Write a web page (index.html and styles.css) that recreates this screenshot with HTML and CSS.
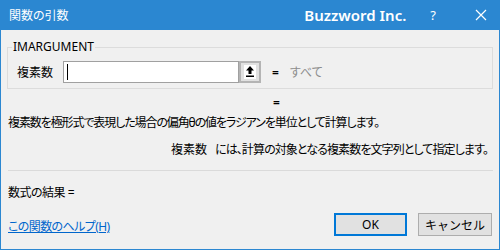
FILE: index.html
```html
<!DOCTYPE html>
<html lang="ja">
<head>
  <meta charset="UTF-8">
  <title>関数の引数</title>
  <link rel="stylesheet" href="styles.css">
</head>
<body>
  <div class="window">
    <header class="titlebar">
      <span class="title">関数の引数</span>
      <span class="brand">Buzzword Inc.</span>
      <span class="help">?</span>
      <svg class="close" width="12" height="12" viewBox="0 0 12 12">
        <path d="M1 1 L11 11 M11 1 L1 11" stroke="#fff" stroke-width="1.2" fill="none"/>
      </svg>
    </header>

    <main class="content">
      <fieldset class="group">
        <legend>IMARGUMENT</legend>
        <div class="arg-row">
          <span class="arg-name">複素数</span>
          <div class="arg-input"><span class="caret"></span></div>
          <div class="ref-btn">
            <svg width="18" height="18" viewBox="0 0 18 18">
              <rect x="3" y="2" width="12" height="14" fill="#fff"/>
              <path d="M9 3 L5 7.5 L7.5 7.5 L7.5 11 L10.5 11 L10.5 7.5 L13 7.5 Z" fill="#000"/>
              <rect x="5" y="12.5" width="8" height="1.5" fill="#000"/>
            </svg>
          </div>
          <span class="eq">=</span>
          <span class="arg-value">すべて</span>
        </div>
      </fieldset>

      <div class="result-eq">=</div>
      <p class="desc">複素数を極形式で表現した場合の偏角θの値をラジアンを単位として計算します。</p>
      <p class="arg-desc"><span class="arg-label">複素数</span>には、計算の対象となる複素数を文字列として指定します。</p>
      <hr class="sep">
      <p class="formula">数式の結果 =</p>

      <footer class="bottom">
        <a href="#" class="help-link">この関数のヘルプ(H)</a>
        <div class="buttons">
          <button class="btn btn-ok">OK</button>
          <button class="btn">キャンセル</button>
        </div>
      </footer>
    </main>
  </div>
</body>
</html>
```

FILE: styles.css
```css
body {
  margin: 0;
  font-family: "Noto Sans", "Noto Sans CJK JP", sans-serif;
  font-size: 12px;
  font-feature-settings: "palt";
  color: #000;
}
.window {
  width: 500px;
  height: 250px;
  box-sizing: border-box;
  background-color: #f0f0f0;
  border: 1px solid #2b87d1;
  border-top: none;
  overflow: hidden;
}
.titlebar {
  height: 30px;
  margin: 0 -1px;
  display: flex;
  align-items: center;
  background-color: #2b87d1;
  color: #fff;
}
.title {
  margin-left: 9px;
  font-size: 12px;
  flex: 1;
}
.brand {
  font-size: 15px;
  font-weight: 600;
  margin-right: 24px;
}
.help {
  font-size: 13px;
  margin-right: 39px;
}
.close {
  margin-right: 13px;
}
.content {
  padding: 9px 6px 0;
}
.group {
  margin: 0;
  padding: 6px 0 5px 4px;
  border: 1px solid #dcdcdc;
}
.group legend {
  padding: 0 1px;
  line-height: 16px;
}
.arg-row {
  display: flex;
  align-items: center;
  height: 22px;
  margin-left: 5px;
}
.arg-name {
  width: 46px;
}
.arg-input {
  width: 176px;
  height: 22px;
  box-sizing: border-box;
  background-color: #fff;
  border: 1px solid #a0a0a0;
  display: flex;
  align-items: center;
  padding-left: 3px;
}
.caret {
  width: 1px;
  height: 16px;
  background-color: #000;
}
.ref-btn {
  width: 22px;
  height: 22px;
  box-sizing: border-box;
  border: 2px solid #b4b4b4;
  background-color: #e1e1e1;
  display: flex;
  align-items: center;
  justify-content: center;
}
.eq {
  margin-left: 11px;
  font-weight: 600;
}
.arg-value {
  margin-left: 11px;
  color: #8c8c8c;
}
.result-eq {
  margin-top: 6px;
  height: 16px;
  line-height: 16px;
  padding-left: 266px;
  font-weight: 600;
}
.desc {
  margin: 4px 0 0 1px;
  line-height: 16px;
  letter-spacing: -1.1px;
  white-space: nowrap;
}
.arg-desc {
  margin: 11px 0 0 164px;
  line-height: 16px;
  letter-spacing: -0.9px;
  white-space: nowrap;
}
.arg-label {
  margin-right: 8px;
  letter-spacing: 0;
}
.sep {
  margin: 12px 0 0 1px;
  border: none;
  border-top: 1px solid #dadada;
}
.formula {
  margin: 14px 0 0 1px;
  line-height: 16px;
  letter-spacing: -0.5px;
}
.bottom {
  margin-top: 12px;
  display: flex;
  justify-content: space-between;
  align-items: center;
}
.help-link {
  margin-left: 1px;
  margin-top: 3px;
  color: #0066cc;
  letter-spacing: -0.6px;
}
.buttons {
  display: flex;
  gap: 11px;
  margin-right: 1px;
}
.btn {
  width: 74px;
  height: 23px;
  box-sizing: border-box;
  font-family: inherit;
  font-size: 12px;
  background-color: #e1e1e1;
  border: 1px solid #adadad;
  padding: 0;
  color: #000;
}
.btn-ok {
  width: 73px;
  border: 2px solid #0078d7;
}
```
